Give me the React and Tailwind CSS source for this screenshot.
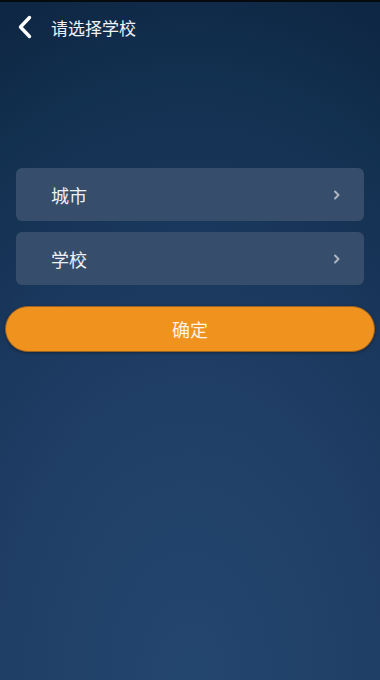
import React from "react";

const font = { fontFamily: '"Noto Sans CJK SC", "Noto Sans", sans-serif' };

function Chevron() {
  return (
    <svg width="10" height="12" viewBox="0 0 10 12" fill="none">
      <path d="M3 2.5 L6.5 6 L3 9.5" stroke="#aab4c2" strokeWidth="2" strokeLinecap="round" strokeLinejoin="round" />
    </svg>
  );
}

function Row({ label }) {
  return (
    <div className="flex h-[53px] items-center justify-between rounded-[6px] bg-[#364e6b] pl-[35px] pr-[22px]">
      <span className="text-[18px] leading-none text-[#eef1f5]">{label}</span>
      <Chevron />
    </div>
  );
}

export default function App() {
  return (
    <div
      style={font}
      className="relative h-[680px] w-[380px] overflow-hidden bg-[radial-gradient(ellipse_120%_105%_at_50%_100%,#23466f_0%,#203f66_40%,#19365b_65%,#12304f_85%,#0e2744_100%)]"
    >
      <div className="h-[2px] bg-[#050a10]" />
      <div className="flex h-[50px] items-center">
        <div className="flex w-[51px] items-center pl-[17px]">
          <svg width="16" height="24" viewBox="0 0 16 24" fill="none">
            <path d="M12.5 2.5 L3.5 12 L12.5 21.5" stroke="#ffffff" strokeWidth="3.4" strokeLinecap="round" strokeLinejoin="round" />
          </svg>
        </div>
        <span className="text-[17px] leading-none text-[#eef1f5]">请选择学校</span>
      </div>
      <div className="mt-[116px] flex flex-col gap-[11px] px-[16px]">
        <Row label="城市" />
        <Row label="学校" />
      </div>
      <div className="mt-[21px] px-[5px]">
        <div className="flex h-[46px] items-center justify-center rounded-full border border-[#9a6220] bg-[#f0921e] shadow-[0_1px_3px_rgba(0,0,0,0.35)]">
          <span className="text-[18px] leading-none text-[#fdf3e6]">确定</span>
        </div>
      </div>
    </div>
  );
}
